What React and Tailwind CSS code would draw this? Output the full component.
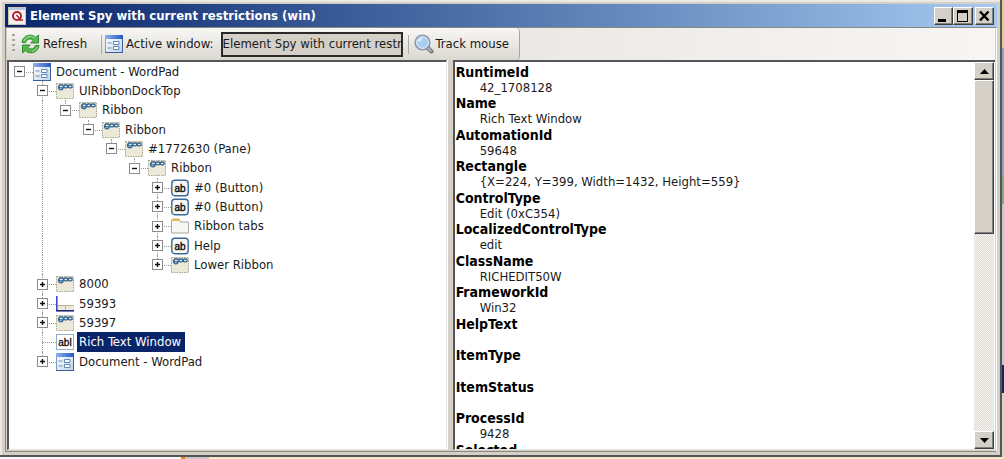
import { useState } from "react";

const NODES = [
  { depth: 0, icon: "form", label: "Document - WordPad", state: "open" },
  { depth: 1, icon: "pane", label: "UIRibbonDockTop", state: "open" },
  { depth: 2, icon: "pane", label: "Ribbon", state: "open" },
  { depth: 3, icon: "pane", label: "Ribbon", state: "open" },
  { depth: 4, icon: "pane", label: "#1772630 (Pane)", state: "open" },
  { depth: 5, icon: "pane", label: "Ribbon", state: "open" },
  { depth: 6, icon: "button", label: "#0 (Button)", state: "closed" },
  { depth: 6, icon: "button", label: "#0 (Button)", state: "closed" },
  { depth: 6, icon: "tabs", label: "Ribbon tabs", state: "closed" },
  { depth: 6, icon: "button", label: "Help", state: "closed" },
  { depth: 6, icon: "pane", label: "Lower Ribbon", state: "closed", last: true },
  { depth: 1, icon: "pane", label: "8000", state: "closed" },
  { depth: 1, icon: "status", label: "59393", state: "closed" },
  { depth: 1, icon: "pane", label: "59397", state: "closed" },
  { depth: 1, icon: "edit", label: "Rich Text Window", state: "leaf" },
  { depth: 1, icon: "form", label: "Document - WordPad", state: "closed", last: true },
];

const PROPERTIES = [
  ["RuntimeId", "42_1708128"],
  ["Name", "Rich Text Window"],
  ["AutomationId", "59648"],
  ["Rectangle", "{X=224, Y=399, Width=1432, Height=559}"],
  ["ControlType", "Edit (0xC354)"],
  ["LocalizedControlType", "edit"],
  ["ClassName", "RICHEDIT50W"],
  ["FrameworkId", "Win32"],
  ["HelpText", ""],
  ["ItemType", ""],
  ["ItemStatus", ""],
  ["ProcessId", "9428"],
  ["Selected", ""],
];

// Classic raised 3D edge shared by caption and scroll buttons.
const raised =
  "border border-t-white border-l-white border-r-[#404040] border-b-[#404040] bg-[#d4d0c8] shadow-[inset_-1px_-1px_0_#808080]";

export default function App() {
  const [selected, setSelected] = useState(14);

  return (
    <div className="flex h-screen flex-col overflow-hidden bg-[#e9e6d2] font-['DejaVu_Sans_Condensed','DejaVu_Sans',sans-serif] text-[13px] text-[#1a1a1a]">
      <div className="flex min-h-0 flex-1">
        <div className="flex min-w-0 flex-1 flex-col border-r-2 border-b-2 border-r-[#55565a] border-b-[#55565a] bg-[#d4d0c8] pt-1 pr-[3px] pb-[3px] pl-[5px] shadow-[inset_2px_2px_0_#ece9e2]">
          <TitleBar />
          <div className="flex min-h-0 flex-1 flex-col border border-[#8a8883] border-r-white border-b-[#8a8883] px-px">
            <Toolbar />
            <div className="flex min-h-0 flex-1 pb-px">
              <ul
                role="tree"
                aria-label="Elements"
                className="w-[44.5%] overflow-hidden border-t-2 border-r border-b border-l-2 border-[#55565a] border-r-[#e6e3dc] border-b-[#e6e3dc] bg-white pl-px"
              >
                {NODES.map((node, i) => (
                  <TreeRow
                    key={i}
                    node={node}
                    selected={i === selected}
                    onSelect={() => setSelected(i)}
                  />
                ))}
              </ul>
              <div className="w-1.5 shrink-0 border-l border-l-white bg-[#d4d0c8]" />
              <div className="flex min-w-0 flex-1 border-t-2 border-b border-l-2 border-[#55565a] border-b-[#e6e3dc] bg-white">
                <PropertyList />
                <ScrollBar />
              </div>
            </div>
          </div>
        </div>
        <div className="flex w-0.5 flex-col">
          <div className="h-12 bg-[#d8cf86]" />
          <div className="h-32 bg-[#8fa3c4]" />
          <div className="h-7 bg-[#7fae83]" />
          <div className="flex-1 bg-[#c3c8cf]" />
          <div className="h-7 bg-[#0f2a62]" />
          <div className="h-16 bg-[#d8d6c0]" />
        </div>
      </div>
      <div className="flex h-0.5">
        <div className="w-[18%] bg-white" />
        <div className="w-1 bg-[#e8860c]" />
        <div className="w-6 bg-[#c8c8cc]" />
        <div className="flex-1 bg-[#f5ecc4]" />
      </div>
    </div>
  );
}

function TitleBar() {
  return (
    <header className="flex h-[23px] shrink-0 items-center bg-gradient-to-r from-[#0a246a] to-[#a6caf0] pr-[3px] pl-[3px]">
      <SpyIcon />
      <h1 className="ml-1 flex-1 truncate font-bold text-white">
        Element Spy with current restrictions (win)
      </h1>
      <button aria-label="Minimize" className={`h-[18px] w-[19px] ${raised}`}>
        <svg viewBox="0 0 17 16" className="h-4 w-[17px]">
          <path d="M3 11h8v3H3z" />
        </svg>
      </button>
      <button aria-label="Maximize" className={`h-[18px] w-5 ${raised}`}>
        <svg viewBox="0 0 17 16" className="h-4 w-[17px]">
          <path d="M3 2h11v12H3zM4 5v8h9V5z" fillRule="evenodd" />
        </svg>
      </button>
      <button aria-label="Close" className={`ml-0.5 h-[18px] w-[19px] ${raised}`}>
        <svg viewBox="0 0 17 16" className="h-4 w-[17px]">
          <path d="M4 3.5l8.5 9M12.5 3.5l-8.5 9" stroke="#000" strokeWidth="2.4" />
        </svg>
      </button>
    </header>
  );
}

function Toolbar() {
  return (
    <div className="flex h-8 shrink-0 bg-gradient-to-r from-[#dedbd4] to-[#f7f6f5]">
      <div className="flex items-center rounded-r-sm border-r border-r-[#a9a69f] bg-gradient-to-b from-[#f8f7f5] to-[#dbd8d1] pr-[10px] pl-[5px]">
        <div className="mr-1.5 h-5 w-[3px] bg-[repeating-linear-gradient(to_bottom,#a9a69e_0_2px,transparent_2px_5px)]" />
        <button className="flex items-center gap-[3px]">
          <RefreshIcon />
          Refresh
        </button>
        <Separator className="mr-[3px] ml-3.5" />
        <label htmlFor="active-window" className="flex items-center gap-[3px]">
          <FormIcon />
          Active window:
        </label>
        <input
          id="active-window"
          readOnly
          defaultValue="Element Spy with current restrictions (win)"
          className="ml-[7px] h-[25px] w-[182px] border-2 border-[#2a2a2a] bg-[#d4d0c8] pb-0.5 outline-none"
        />
        <Separator className="mr-[5px] ml-[5px]" />
        <button className="flex items-center gap-0.5">
          <MagnifierIcon />
          Track mouse
        </button>
      </div>
    </div>
  );
}

function Separator({ className }) {
  return <div className={`h-[19px] w-px bg-[#aeaba4] ${className}`} />;
}

function TreeRow({ node, selected, onSelect }) {
  const { depth, label, state, last } = node;
  const Icon = ICONS[node.icon];

  return (
    <li
      role="treeitem"
      aria-selected={selected}
      className="flex h-[19px] items-center nth-[3n]:h-5"
    >
      {Array.from({ length: depth }, (_, level) => (
        <div key={level} className="flex h-full w-[23px] shrink-0">
          {level === 1 && <div className="w-[10px] border-r border-dotted border-[#9a9a9a]" />}
        </div>
      ))}
      <div className="relative flex h-full w-[23px] shrink-0 items-center">
        {depth > 0 && (
          <div className="absolute top-0 left-[9px] h-1/2 border-l border-dotted border-[#9a9a9a]" />
        )}
        {((depth === 1 || depth === 6) && !last) && (
          <div className="absolute bottom-0 left-[9px] h-1/2 border-l border-dotted border-[#9a9a9a]" />
        )}
        <div className="absolute top-1/2 right-0 left-[10px] border-t border-dotted border-[#9a9a9a]" />
        {state !== "leaf" && (
          <button
            aria-label={`${state === "open" ? "Collapse" : "Expand"} ${label}`}
            className="relative ml-1 size-[11px] border border-[#8c8c8c] bg-white"
          >
            <svg viewBox="0 0 9 9" className="size-[9px]">
              <path
                d={state === "open" ? "M2 4.5h5" : "M2 4.5h5M4.5 2v5"}
                stroke="#111"
                strokeWidth="1.4"
              />
            </svg>
          </button>
        )}
      </div>
      <Icon />
      <button
        onClick={onSelect}
        className={`ml-[3px] h-full pr-1 pl-0.5 whitespace-nowrap ${selected ? "bg-[#0a246a] text-white" : ""}`}
      >
        {label}
      </button>
    </li>
  );
}

function PropertyList() {
  return (
    <dl className="min-w-0 flex-1 overflow-hidden pt-0.5 pl-px whitespace-nowrap">
      {PROPERTIES.map(([name, value]) => (
        <div key={name} className="even:pb-px">
          <dt className="h-4 text-[14px] leading-4 font-bold text-black">{name}</dt>
          <dd className="h-[15px] pl-6 leading-4">{value}</dd>
        </div>
      ))}
    </dl>
  );
}

function ScrollBar() {
  return (
    <div className="mr-px flex w-5 shrink-0 flex-col bg-[repeating-conic-gradient(#dedbd5_0_25%,#f6f5f2_0_50%)] bg-[size:2px_2px]">
      <button aria-label="Scroll up" className={`flex h-[18px] items-center justify-center ${raised}`}>
        <svg viewBox="0 0 9 5" className="h-[5px] w-[9px]">
          <path d="M4.5 0L9 5H0z" />
        </svg>
      </button>
      <div className="min-h-0 flex-1">
        <div className={`h-[44%] ${raised}`} />
      </div>
      <button aria-label="Scroll down" className={`flex h-[18px] items-center justify-center ${raised}`}>
        <svg viewBox="0 0 9 5" className="h-[5px] w-[9px]">
          <path d="M0 0h9L4.5 5z" />
        </svg>
      </button>
    </div>
  );
}

function SpyIcon() {
  return (
    <svg viewBox="0 0 18 18" className="size-[18px] shrink-0">
      <rect x=".5" y=".5" width="17" height="17" fill="#f3f1ee" stroke="#c8c5bd" />
      <path d="M1 1h16v2H1z" fill="#b9c7dd" />
      <circle cx="9" cy="9" r="4" fill="#fff" stroke="#b3202c" strokeWidth="2" />
      <path d="M8.5 8l3 3.5M11 13h4" stroke="#b3202c" strokeWidth="1.6" />
    </svg>
  );
}

function RefreshIcon() {
  return (
    <svg viewBox="0 0 19 20" className="h-5 w-[19px]" fill="#57b84c" stroke="#26832a" strokeWidth=".9" strokeLinejoin="round">
      <path d="M1 8.5C1.5 4 5 1.2 9 1.2c2.300 0 4.200.8 5.700 2.200L17.500 1v8H9.800l2.500-2.700C11.300 5.400 10.200 5 9 5 6.600 5 5.200 6.300 4.600 8.500z" />
      <path d="M18 11.500c-.5 4.500-4 7.300-8 7.300-2.300 0-4.200-.8-5.700-2.200L1.500 19v-8h7.700l-2.500 2.700c1 .9 2.100 1.300 3.300 1.300 2.400 0 3.800-1.300 4.400-3.500z" />
      <path d="M3 7c1-3 3.500-4.500 6-4.500 2 0 3.500.7 5 2M11 17.500c2.500-.3 4.500-2 5.300-4.500" fill="none" stroke="#a7e39c" />
    </svg>
  );
}

function MagnifierIcon() {
  return (
    <svg viewBox="0 0 20 20" className="size-5">
      <path d="M13 13l4.500 4.500" stroke="#77797d" strokeWidth="4" strokeLinecap="round" />
      <path d="M13.500 13.500l3.500 3.500" stroke="#c3c5c9" strokeWidth="1.500" strokeLinecap="round" />
      <circle cx="8.500" cy="8.500" r="7.300" fill="#a9cdf0" stroke="#8d98a8" strokeWidth="1.600" />
      <circle cx="8.500" cy="8.500" r="5.800" fill="none" stroke="#e4f0fb" />
      <path d="M4 8c.5-2.500 2.300-4 4.500-4.300C8 6 6.500 7.500 4 8z" fill="#e9f4fd" />
    </svg>
  );
}

function FormIcon() {
  return (
    <svg viewBox="0 0 18 18" className="size-[18px] shrink-0">
      <defs>
        <linearGradient id="caption" x1="0" x2="1">
          <stop offset="0" stopColor="#8fb3ea" />
          <stop offset="1" stopColor="#2458c4" />
        </linearGradient>
        <linearGradient id="body" x1="0" x2="1" y1="0" y2="1">
          <stop offset="0" stopColor="#fff" />
          <stop offset="1" stopColor="#c3d3ea" />
        </linearGradient>
      </defs>
      <rect x=".5" y=".5" width="17" height="17" fill="url(#body)" stroke="#7f9dca" />
      <path d="M0 0h18v4H0z" fill="url(#caption)" />
      <path d="M17.500 3v15M0 17.500h18" stroke="#3a5f9f" />
      <path d="M2.500 8h4M2.500 13h4" stroke="#6b8fb5" strokeWidth="1.200" />
      <path d="M8.500 6.500h5.500v3H8.500zM8.500 11.500h5.500v3H8.500z" fill="#fff" stroke="#5d88b8" />
    </svg>
  );
}

function PaneIcon() {
  return (
    <svg viewBox="0 0 18 18" className="size-[18px] shrink-0">
      <rect x=".5" y="1.500" width="17" height="15" fill="#ece9d8" stroke="#a8a58c" strokeDasharray="1.500 1" />
      <g fill="#dce8f2" stroke="#34648f" strokeWidth="1.300">
        <circle cx="4.800" cy="5.500" r="2.300" />
        <rect x="3" y="3" width="4.500" height="2.800" rx="1.400" />
        <rect x="7.800" y="3" width="4" height="2.800" rx="1.400" />
        <rect x="12.200" y="3" width="4" height="2.800" rx="1.400" />
      </g>
    </svg>
  );
}

function ButtonIcon() {
  return (
    <svg viewBox="0 0 18 18" className="size-[18px] shrink-0">
      <rect x=".8" y="1.300" width="16.400" height="15.400" rx="3" fill="#f8f8f6" stroke="#3b6a99" strokeWidth="1.400" />
      <text x="9" y="12.500" textAnchor="middle" fontSize="10" fontFamily="Liberation Sans, sans-serif" stroke="#111" strokeWidth=".4">
        ab
      </text>
    </svg>
  );
}

function TabsIcon() {
  return (
    <svg viewBox="0 0 18 18" className="size-[18px] shrink-0">
      <path d="M.5 16V3.500L1.500 2h6.500l1.500 3h8v11z" fill="#f7f6f3" stroke="#aaa8a2" />
      <path d="M1.500 2h6.500l1 2H1z" fill="#efb64a" />
    </svg>
  );
}

function StatusIcon() {
  return (
    <svg viewBox="0 0 18 18" className="size-[18px] shrink-0">
      <rect x="1" y="10" width="17" height="5.500" fill="#ece9d8" />
      <path d="M2 10.500h16M9.500 10.500v4" stroke="#b5b29c" />
      <path d="M.8 1v15" stroke="#2b3fd0" strokeWidth="1.500" />
      <path d="M0 15.800h18" stroke="#1d2a78" strokeWidth="1.600" />
    </svg>
  );
}

function EditIcon() {
  return (
    <svg viewBox="0 0 18 18" className="size-[18px] shrink-0">
      <rect x=".5" y="1.500" width="17" height="15" fill="#fff" stroke="#8fb0cf" />
      <text x="9" y="12.500" textAnchor="middle" fontSize="10" fontFamily="Liberation Sans, sans-serif" stroke="#111" strokeWidth=".3">
        abl
      </text>
    </svg>
  );
}

const ICONS = {
  form: FormIcon,
  pane: PaneIcon,
  button: ButtonIcon,
  tabs: TabsIcon,
  status: StatusIcon,
  edit: EditIcon,
};
